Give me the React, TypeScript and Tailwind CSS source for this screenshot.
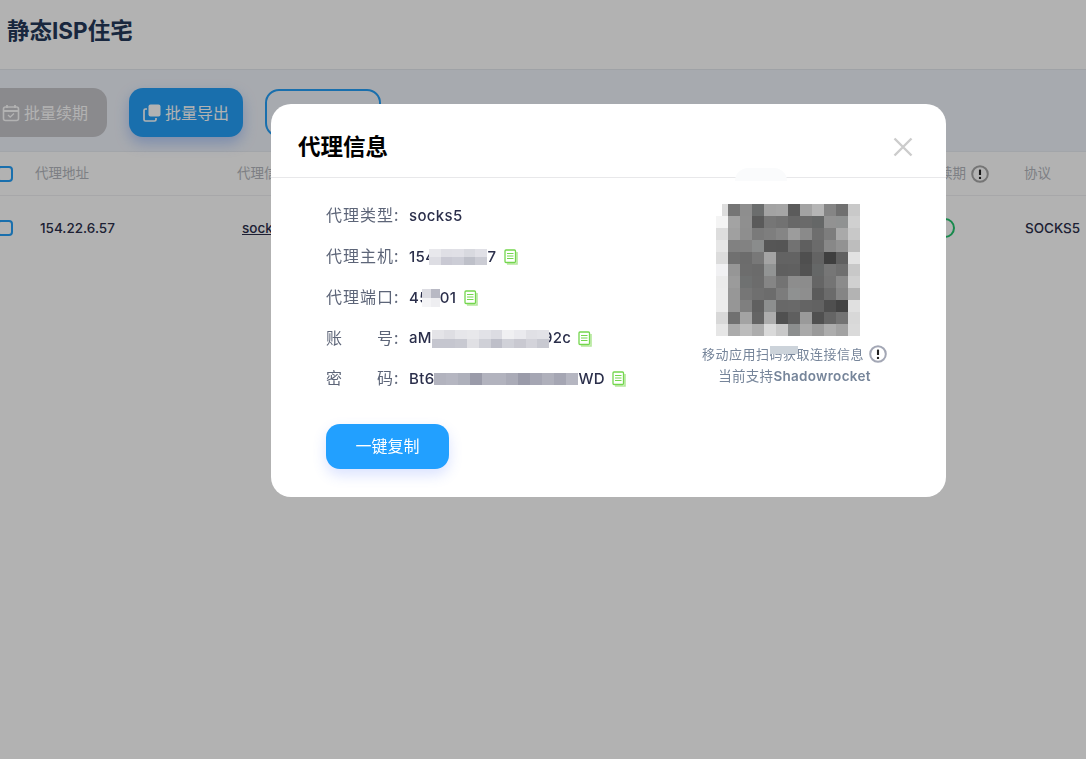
import React from 'react';

const latin = 'font-["Inter","Noto_Sans_CJK_SC",sans-serif]';

const qrRows = [
  ['#ffffff', '#757575', '#8e8e8e', '#6b6d6d', '#a3a3a3', '#a5a5a5', '#5b5b5b', '#a3a3a3', '#b5b5b5', '#858585', '#707070', '#c9c9c9'],
  ['#f4f4f4', '#a3a3a3', '#8f8f8f', '#5a5a5a', '#767676', '#727272', '#686868', '#6a6a6a', '#656767', '#929292', '#909292', '#d0d0d0'],
  ['#dddddd', '#a0a0a0', '#8e8e8e', '#7a7a7a', '#7e7e7e', '#858585', '#9c9c9c', '#8a8a8a', '#6e6e6e', '#7d7d7d', '#a9a9a9', '#c8c8c8'],
  ['#e6e6e6', '#818181', '#828282', '#8a8c8c', '#565656', '#555555', '#727272', '#5f5f5f', '#6b6b6b', '#888888', '#929292', '#bdbdbd'],
  ['#dcdcdc', '#707070', '#6c6c6c', '#787878', '#a4a4a4', '#636363', '#636363', '#4f4f4f', '#636363', '#3f3f3f', '#606060', '#e2e2e2'],
  ['#f1f1f3', '#969696', '#6d6d6d', '#6b6b6b', '#929494', '#5f5f5f', '#606060', '#525252', '#656767', '#767676', '#6f6f6f', '#c8c8c8'],
  ['#ebebeb', '#9b9b9b', '#6f7171', '#6c6c6c', '#858585', '#737373', '#8d8d8d', '#8c8c8c', '#656565', '#747474', '#8b8b8b', '#d0d0d0'],
  ['#ececec', '#979797', '#767676', '#6f6f6f', '#6c6c6c', '#7c7c7c', '#8f9191', '#8e8e8e', '#5b5b5b', '#6b6b6b', '#858585', '#b3b3b3'],
  ['#ececec', '#969696', '#7f7f7f', '#606060', '#8d8f8f', '#686868', '#696969', '#646464', '#626262', '#4f4f4f', '#434343', '#e0e0e0'],
  ['#d8d8d8', '#707070', '#a3a3a3', '#646464', '#adadad', '#505050', '#5f5f5f', '#9a9a9a', '#505050', '#656565', '#737373', '#d8d8d8'],
  ['#e6e6e6', '#ababab', '#bcbcbc', '#adadad', '#d9d9d9', '#c8c8c8', '#8c8e8e', '#a9a9a9', '#9a9a9a', '#adadad', '#a2a2a2', '#dadada'],
];

// blurred-out pieces of the credentials
function Mosaic({ rows, cell, rowH }: { rows: string[][]; cell: number; rowH: number }) {
  const w = rows[0].length * cell;
  const h = rows.length * rowH;
  return (
    <svg width={w} height={h} className="shrink-0 relative z-10" shapeRendering="crispEdges">
      {rows.map((row, y) =>
        row.map((c, x) => <rect key={`${x}-${y}`} x={x * cell} y={y * rowH} width={cell} height={rowH} fill={c} />)
      )}
    </svg>
  );
}

function CopyIcon() {
  return (
    <svg width="14" height="16" viewBox="0 0 14 16" fill="none" className="shrink-0">
      <path d="M3 15h10V3" stroke="#b5e89c" strokeWidth="1.6" />
      <rect x="1" y="1" width="10.5" height="12.5" rx="1" fill="#fff" stroke="#74d64e" strokeWidth="1.3" />
      <path d="M3 4.5h6.5M3 7h6.5M3 9.5h6.5" stroke="#74d64e" strokeWidth="1" />
    </svg>
  );
}

function InfoIcon({ color }: { color: string }) {
  return (
    <svg width="18" height="18" viewBox="0 0 18 18" fill="none" className="shrink-0">
      <circle cx="9" cy="9" r="7.8" stroke={color} strokeWidth="2" />
      <path d="M9 4.6v5.4" stroke="#222" strokeWidth="2.1" />
      <circle cx="9" cy="12.9" r="1.2" fill="#222" />
    </svg>
  );
}

function Checkbox() {
  return <span className="block w-4 h-4 rounded-[4px] border-2 border-[#25a0f8] bg-white/40 shrink-0" />;
}

function InfoRow({ label, children }: { label: React.ReactNode; children: React.ReactNode }) {
  return (
    <div className="flex items-center h-[40.75px]">
      <div className="w-[83px] pb-[4px] flex items-center text-[16px] tracking-[1px] text-[#5d6578] font-['Noto_Sans_CJK_SC',sans-serif] shrink-0">
        {label}
      </div>
      <div className={`flex items-center text-[15px] font-medium tracking-[0.35px] text-[#2b2f4b] ${latin}`}>{children}</div>
    </div>
  );
}

function Spread({ a, b }: { a: string; b: string }) {
  return (
    <>
      <span className="w-[68px] flex justify-between">
        <span>{a}</span>
        <span>{b}</span>
      </span>
      <span>:</span>
    </>
  );
}

export default function App() {
  return (
    <div className={`relative h-screen overflow-hidden bg-white ${latin}`}>
      <div className="h-[70px] flex items-center pl-[7px] pb-[8px] border-b border-[#e4e8ee]">
        <h1 className="text-[22.5px] font-bold text-[#24395a]">静态ISP住宅</h1>
      </div>

      <div className="h-[82px] bg-[#f0f4fb] flex items-center gap-[22px] -ml-[17px] pt-[4px] border-b border-[#e8ecf2]">
        <button className="w-[124px] h-[49px] rounded-[14px] bg-[#c6c6cb] text-white text-[16px] flex items-center justify-center gap-[4px]">
          <svg width="18" height="18" viewBox="0 0 18 18" fill="none">
            <rect x="1.5" y="3" width="15" height="13.5" rx="2" stroke="#fff" strokeWidth="1.6" />
            <path d="M1.5 7h15" stroke="#fff" strokeWidth="2" />
            <path d="M5 1v3M13 1v3" stroke="#fff" strokeWidth="1.8" />
            <path d="M6 11l2.2 2L12 9.5" stroke="#fff" strokeWidth="1.3" />
          </svg>
          批量续期
        </button>
        <button className="w-[114px] h-[49px] rounded-[14px] bg-[#25a0f8] text-white text-[16px] flex items-center justify-center gap-[4px] shadow-[0_6px_14px_rgba(60,120,240,0.35)]">
          <svg width="18" height="18" viewBox="0 0 18 18" fill="none">
            <rect x="5.5" y="0.5" width="12" height="12" rx="2" fill="#fff" />
            <path d="M4 5H2.5A1.5 1.5 0 0 0 1 6.5v9A1.5 1.5 0 0 0 2.5 17h9a1.5 1.5 0 0 0 1.5-1.5V14" stroke="#fff" strokeWidth="1.7" />
          </svg>
          批量导出
        </button>
        <button className="w-[116px] h-[48px] rounded-[14px] border-2 border-[#25a0f8]" />
      </div>

      <div className="h-[44px] flex items-center border-b border-[#f0f0f2] -ml-[3px] text-[13.5px] text-[#b4b7bd]">
        <Checkbox />
        <span className="ml-[22px] w-[202px]">代理地址</span>
        <span className="w-[702px]">代理信息</span>
        <span className="w-[27px]">续期</span>
        <span className="ml-[5px] mr-[35px]">
          <InfoIcon color="#a8a8a8" />
        </span>
        <span>协议</span>
      </div>

      <div className="h-[64px] flex items-center -ml-[3px] text-[13.5px] font-medium text-[#2b2f4b]">
        <Checkbox />
        <span className="ml-[27px] w-[202px]">154.22.6.57</span>
        <span className="w-[693px] underline">socks5</span>
        <span className="w-[20px] h-[20px] rounded-full border-2 border-[#22c56e]" />
        <span className="ml-[70px]">SOCKS5</span>
      </div>

      <div className="fixed inset-0 bg-black/30">
        <div className="absolute left-[271px] top-[104px] w-[675px] h-[393px] rounded-[20px] bg-white">
          <div className="h-[74px] flex items-center justify-between pl-[27px] pr-[33px] border-b border-[#e8e8ea]">
            <h2 className="text-[22.5px] font-bold text-black pt-[10px] font-['Noto_Sans_CJK_SC',sans-serif]">代理信息</h2>
            <svg width="20" height="20" viewBox="0 0 20 20" className="mt-[12px]">
              <path d="M1.5 1.5l17 17M18.5 1.5l-17 17" stroke="#cccccc" strokeWidth="2.4" />
            </svg>
          </div>

          <div className="flex">
            <div className="pl-[55px] pt-[18px] w-[431px]">
              <InfoRow label="代理类型:">socks5</InfoRow>
              <InfoRow label="代理主机:">
                <span>154</span>
                <span className="ml-[-6px]">
                  <Mosaic cell={11.6} rowH={8} rows={[
                    ['#e8e8ec', '#dfdfe5', '#e0e0e6', '#d8d9df', '#e0e0e6'],
                    ['#dddde3', '#c9c9d3', '#cccdd6', '#bec0c9', '#cbccd4'],
                  ]} />
                </span>
                <span>7</span>
                <span className="ml-[8px]"><CopyIcon /></span>
              </InfoRow>
              <InfoRow label="代理端口:">
                <span>45</span>
                <span className="ml-[-7px]">
                  <Mosaic cell={9} rowH={9} rows={[['#dcdce2', '#b8b9c4'], ['#f4f4f6', '#eeeef1']]} />
                </span>
                <span>01</span>
                <span className="ml-[8px]"><CopyIcon /></span>
              </InfoRow>
              <InfoRow label={<Spread a="账" b="号" />}>
                <span>aM</span>
                <Mosaic cell={11.7} rowH={9} rows={[
                  ['#e4e4e8', '#dedee3', '#e6e6ea', '#e8e8eb', '#e2e2e7', '#dcdce2', '#f0f0f2', '#eaeaee', '#e0e0e5', '#e2e2e7'],
                  ['#c5c6cf', '#c5c6cf', '#c8c9d1', '#e0e0e4', '#cfd0d7', '#bebfc9', '#d0d1d8', '#c9c9d1', '#d3d3da', '#c8c9d1'],
                ]} />
                <span className="ml-[-6px]">92c</span>
                <span className="ml-[7px]"><CopyIcon /></span>
              </InfoRow>
              <InfoRow label={<Spread a="密" b="码" />}>
                <span>Bt6</span>
                <Mosaic cell={12} rowH={12} rows={[
                  ['#b2b3be', '#b5b6c1', '#aeb0bb', '#9a9ba9', '#b2b3be', '#b2b3be', '#aaabb7', '#9a9ba9', '#a5a6b3', '#afb0bb', '#a5a6b3', '#b5b6c1'],
                ]} />
                <span>WD</span>
                <span className="ml-[7px]"><CopyIcon /></span>
              </InfoRow>
              <button className="mt-[24px] w-[123px] h-[45px] pb-[2px] rounded-[14px] bg-[#22a0ff] text-white text-[16px] shadow-[0_6px_14px_rgba(70,110,255,0.2)] font-['Noto_Sans_CJK_SC',sans-serif]">
                一键复制
              </button>
            </div>

            <div className="relative flex flex-col items-center pt-[26px] w-[185px]">
              <div className="relative ml-[-13px] w-[144px] h-[132px]">
                <Mosaic cell={12} rowH={12} rows={qrRows} />
                <span className="absolute left-[6px] top-0 w-[6px] h-[12px] bg-[#dddddd] z-20" />
              </div>
              <div className="mt-[8px] flex items-center text-[13px] tracking-[0.5px] text-[#76859a] font-['Noto_Sans_CJK_SC',sans-serif]">
                <span className="relative whitespace-nowrap">
                  移动应用扫码获取连接信息
                  <span className="absolute left-[68px] top-[2px] w-[28px] h-[8px] bg-[#ccd3da]" />
                </span>
                <span className="ml-[5px]"><InfoIcon color="#a3a7b5" /></span>
              </div>
              <div className="mt-[2px] text-[13.5px] tracking-[0.3px] text-[#76859a] whitespace-nowrap">
                当前支持<span className="font-semibold">Shadowrocket</span>
              </div>
              <span className="absolute left-[33px] top-[-10px] w-[52px] h-[13px] bg-[#fafbfc] rounded-t-[14px]" />
            </div>
          </div>
        </div>
      </div>
    </div>
  );
}
